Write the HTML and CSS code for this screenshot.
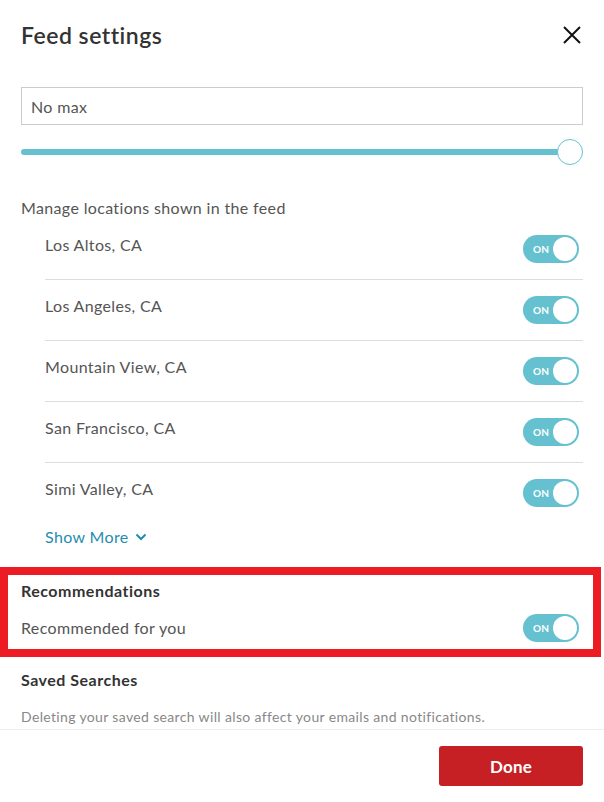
FILE: index.html
```html
<!DOCTYPE html>
<html lang="en">
<head>
<meta charset="utf-8">
<title>Feed settings</title>
<link rel="stylesheet" href="styles.css">
</head>
<body>
<div class="modal">
  <header class="header">
    <h1 class="title">Feed settings</h1>
    <button class="close" aria-label="Close">
      <svg width="18" height="18" viewBox="0 0 18 18"><path d="M1 1L17 17M17 1L1 17" stroke="#111" stroke-width="2" fill="none"/></svg>
    </button>
  </header>
  <div class="body">
    <div class="input">No max</div>
    <div class="slider"><div class="track"></div><div class="thumb"></div></div>
    <p class="manage">Manage locations shown in the feed</p>
    <div class="loc-group">
      <ul class="locations">
        <li class="row"><span class="label">Los Altos, CA</span><span class="toggle"><span class="on">ON</span><span class="knob"></span></span></li>
        <li class="row"><span class="label">Los Angeles, CA</span><span class="toggle"><span class="on">ON</span><span class="knob"></span></span></li>
        <li class="row"><span class="label">Mountain View, CA</span><span class="toggle"><span class="on">ON</span><span class="knob"></span></span></li>
        <li class="row"><span class="label">San Francisco, CA</span><span class="toggle"><span class="on">ON</span><span class="knob"></span></span></li>
        <li class="row"><span class="label">Simi Valley, CA</span><span class="toggle"><span class="on">ON</span><span class="knob"></span></span></li>
      </ul>
      <a class="show-more" href="#">Show More <svg width="12" height="8" viewBox="0 0 12 8"><path d="M1.5 1.5L6 6L10.5 1.5" stroke="#1f8db0" stroke-width="2" fill="none"/></svg></a>
    </div>
  </div>
  <section class="reco">
    <h2 class="section-title">Recommendations</h2>
    <div class="reco-row"><span class="reco-label">Recommended for you</span><span class="toggle"><span class="on">ON</span><span class="knob"></span></span></div>
  </section>
  <section class="saved">
    <h2 class="section-title">Saved Searches</h2>
    <p class="note">Deleting your saved search will also affect your emails and notifications.</p>
  </section>
  <footer class="footer">
    <button class="done">Done</button>
  </footer>
</div>
</body>
</html>
```

FILE: styles.css
```css
* { box-sizing: border-box; }
html, body { margin: 0; padding: 0; background: #fff; }
body { font-family: Lato, "Open Sans", sans-serif; color: #555; width: 604px; height: 802px; overflow: hidden; letter-spacing: 0.35px; }
.modal { display: flex; flex-direction: column; }
.header { display: flex; align-items: center; justify-content: space-between; height: 70px; padding: 0 23px 0 21px; }
.title { margin: 0; font-size: 23px; font-weight: 600; color: #333; letter-spacing: 0.5px; line-height: 28px; }
.close { border: 0; background: none; padding: 0; width: 18px; height: 18px; display: flex; }
.body { padding: 0 21px; }
.input { margin-top: 17px; height: 38px; border: 1px solid #ccc; padding: 0 9px; display: flex; align-items: center; font-size: 16px; color: #555; }
.slider { position: relative; margin-top: 14px; height: 26px; display: flex; align-items: center; }
.track { height: 6px; width: 100%; background: #65c1cf; border-radius: 3px; margin-right: 13px; }
.thumb { position: absolute; right: 0; top: 0; width: 26px; height: 26px; border-radius: 50%; background: #fff; border: 1.5px solid #65c1cf; }
.manage { margin: 33px 0 0; font-size: 16px; line-height: 20px; }
.loc-group { padding-left: 24px; }
.locations { list-style: none; margin: 1px 0 0; padding: 0; }
.row { height: 61px; display: flex; align-items: center; justify-content: space-between; border-bottom: 1px solid #ddd; padding-right: 4px; }
.row:last-child { border-bottom: 0; height: 60px; }
.label { font-size: 16px; line-height: 20px; padding-bottom: 8px; color: #555; }
.toggle { position: relative; width: 56px; height: 28px; border-radius: 14px; background: #65c1cf; display: flex; align-items: center; flex: none; }
.on { color: #fff; font-size: 10px; font-weight: 700; margin-left: 10px; letter-spacing: 0.2px; }
.knob { position: absolute; right: 2px; top: 2px; width: 24px; height: 24px; border-radius: 50%; background: #fff; }
.show-more { display: inline-flex; align-items: center; gap: 6px; margin-top: 4px; font-size: 16px; line-height: 20px; color: #1f8db0; text-decoration: none; }
.reco { margin-top: 20px; width: 601px; border: 8px solid #ed1c24; padding: 6px 14px 7px 13px; }
.section-title { margin: 0; font-size: 16px; line-height: 20px; font-weight: 700; color: #333; letter-spacing: 0.5px; }
.reco-row { margin-top: 13px; display: flex; align-items: center; justify-content: space-between; }
.reco-label { font-size: 16px; line-height: 20px; color: #555; }
.saved { padding: 0 21px; margin-top: 13px; }
.note { margin: 18px 0 0; font-size: 14px; line-height: 18px; color: #888; }
.footer { margin-top: 3px; border-top: 1px solid #eee; padding: 16px 21px 0; display: flex; justify-content: flex-end; }
.done { width: 144px; height: 40px; border: 0; border-radius: 3px; background: #c61f24; color: #fff; font-family: Lato, sans-serif; font-size: 17px; font-weight: 700; letter-spacing: 0.2px; }
```
